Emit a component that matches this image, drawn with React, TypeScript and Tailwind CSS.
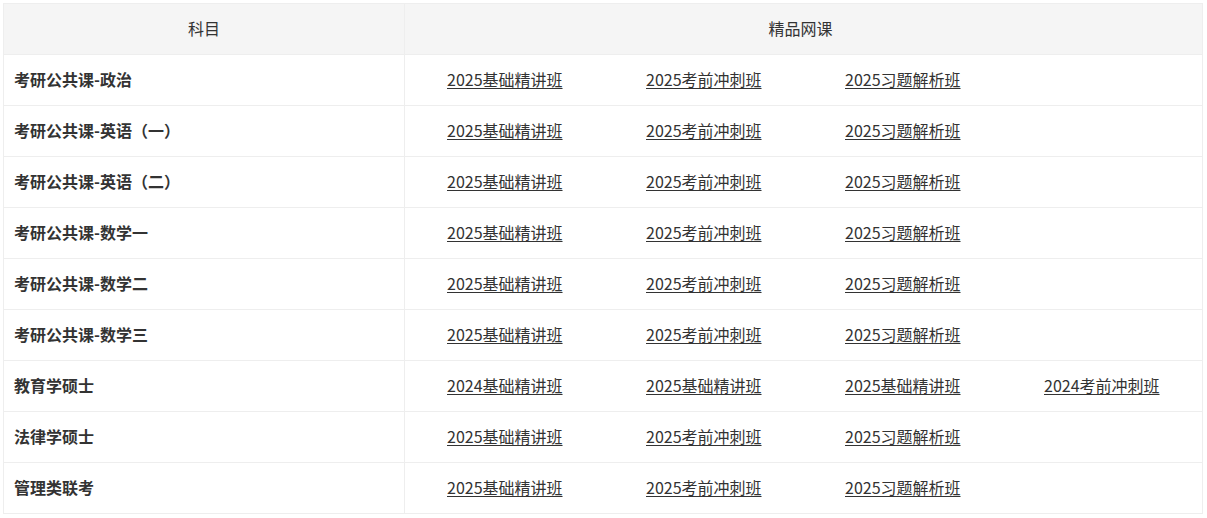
const rows: { name: string; links: string[] }[] = [
  { name: "考研公共课-政治", links: ["2025基础精讲班", "2025考前冲刺班", "2025习题解析班"] },
  { name: "考研公共课-英语（一）", links: ["2025基础精讲班", "2025考前冲刺班", "2025习题解析班"] },
  { name: "考研公共课-英语（二）", links: ["2025基础精讲班", "2025考前冲刺班", "2025习题解析班"] },
  { name: "考研公共课-数学一", links: ["2025基础精讲班", "2025考前冲刺班", "2025习题解析班"] },
  { name: "考研公共课-数学二", links: ["2025基础精讲班", "2025考前冲刺班", "2025习题解析班"] },
  { name: "考研公共课-数学三", links: ["2025基础精讲班", "2025考前冲刺班", "2025习题解析班"] },
  { name: "教育学硕士", links: ["2024基础精讲班", "2025基础精讲班", "2025基础精讲班", "2024考前冲刺班"] },
  { name: "法律学硕士", links: ["2025基础精讲班", "2025考前冲刺班", "2025习题解析班"] },
  { name: "管理类联考", links: ["2025基础精讲班", "2025考前冲刺班", "2025习题解析班"] },
];

export default function App() {
  return (
    <div
      className="bg-white p-[3px] text-[16px] text-[#333]"
      style={{ fontFamily: '"Noto Sans CJK SC", "Noto Sans", sans-serif' }}
    >
      <table className="w-[1200px] border-collapse table-fixed">
        <thead>
          <tr className="bg-[#f5f5f5]">
            <th className="w-[401px] h-[51px] pb-[2px] border border-[#eee] font-normal text-center">科目</th>
            <th className="h-[51px] pb-[2px] pr-[6px] border border-[#eee] font-normal text-center">精品网课</th>
          </tr>
        </thead>
        <tbody>
          {rows.map((r, i) => (
            <tr key={i}>
              <td className="h-[51px] pb-[2px] border border-[#eee] pl-[10px] font-bold">{r.name}</td>
              <td className="h-[51px] pb-[2px] border border-[#eee] pl-[42px]">
                <div className="flex">
                  {r.links.map((l, j) => (
                    <div key={j} className="flex-none w-[199px] last:w-auto">
                      <a href="#" className="underline underline-offset-[2px] decoration-1">
                        {l}
                      </a>
                    </div>
                  ))}
                </div>
              </td>
            </tr>
          ))}
        </tbody>
      </table>
    </div>
  );
}
